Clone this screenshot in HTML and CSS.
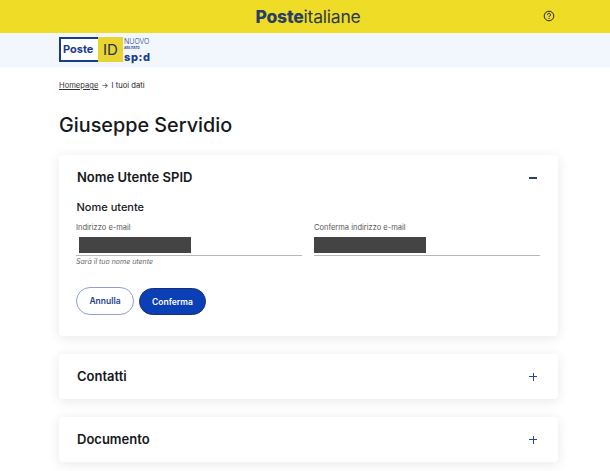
FILE: index.html
```html
<!DOCTYPE html>
<html lang="it">
  <head>
    <meta charset="UTF-8" />
    <meta name="viewport" content="width=device-width, initial-scale=1.0" />
    <title>I tuoi dati</title>
    <link rel="stylesheet" href="styles.css">
  </head>

  <body>
    <header class="topbar">
      <div class="brand"><strong>Poste</strong>italiane</div>
      <svg class="help" width="12" height="12" viewBox="0 0 12 12" fill="none" stroke="#222">
        <circle cx="6" cy="6" r="4.8" />
        <path d="M4.5 4.8a1.5 1.5 0 1 1 2.3 1.2c-.5.3-.8.6-.8 1.1" />
        <path d="M6 8v1" />
      </svg>
    </header>

    <div class="subbar">
      <div class="logo">
        <div class="logo-poste">Poste</div>
        <div class="logo-id">ID</div>
        <div class="logo-spid">
          <span class="nuovo">NUOVO</span>
          <span class="abilitato">ABILITATO</span>
          <span class="spid">sp:d</span>
        </div>
      </div>
    </div>

    <main class="container">
      <nav class="crumbs">
        <a href="#">Homepage</a>
        <span class="arrow">→</span>
        <span>I tuoi dati</span>
      </nav>

      <h1>Giuseppe Servidio</h1>

      <section class="card card-open">
        <div class="card-head">
          <h2>Nome Utente SPID</h2>
          <span class="toggle minus"></span>
        </div>
        <h3>Nome utente</h3>
        <div class="fields">
          <div class="field">
            <label>Indirizzo e-mail</label>
            <div class="input"><span class="redacted"></span></div>
            <p class="hint">Sarà il tuo nome utente</p>
          </div>
          <div class="field field-second">
            <label>Conferma indirizzo e-mail</label>
            <div class="input"><span class="redacted"></span></div>
          </div>
        </div>
        <div class="actions">
          <button class="btn btn-outline">Annulla</button>
          <button class="btn btn-primary">Conferma</button>
        </div>
      </section>

      <section class="card">
        <div class="card-head">
          <h2>Contatti</h2>
          <span class="toggle plus"></span>
        </div>
      </section>

      <section class="card">
        <div class="card-head">
          <h2>Documento</h2>
          <span class="toggle plus"></span>
        </div>
      </section>
    </main>
  </body>
</html>
```

FILE: styles.css
```css
* {
  box-sizing: border-box;
}

html,
body {
  height: 471px;
  overflow: hidden;
}

body {
  margin: 0;
  font-family: Inter, "Liberation Sans", sans-serif;
  color: #15181c;
  background: #fff;
}

.topbar {
  height: 33px;
  background: #efdc27;
  display: flex;
  justify-content: center;
  align-items: center;
  position: relative;
}

.brand {
  font-size: 17.5px;
  letter-spacing: -0.2px;
  color: #2e3a44;
  margin-left: 6px;
}

.brand strong {
  font-weight: 800;
  color: #2a3f62;
}

.help {
  position: absolute;
  left: 543px;
  top: 10px;
}

.subbar {
  height: 34px;
  background: #f2f7fd;
  padding: 4px 0 0 59px;
}

.logo {
  display: flex;
  height: 25px;
}

.logo-poste {
  width: 39px;
  background: #fff;
  border: 2px solid #1a3a8c;
  border-right: 0;
  color: #1a3a8c;
  font-size: 11px;
  font-weight: 700;
  line-height: 21px;
  padding-left: 2px;
}

.logo-id {
  width: 25px;
  background: #e9d52f;
  color: #1f3050;
  font-size: 15px;
  line-height: 25px;
  text-align: center;
}

.logo-spid {
  display: flex;
  flex-direction: column;
  padding-left: 1px;
  color: #1a3a8c;
}

.nuovo {
  font-size: 7px;
  font-weight: 300;
  line-height: 8.6px;
  margin-top: 1.4px;
}

.abilitato {
  font-size: 3px;
  font-weight: 700;
  line-height: 3.8px;
}

.spid {
  font-size: 11px;
  font-weight: 800;
  line-height: 13.4px;
  letter-spacing: 0.6px;
}

.container {
  width: 499px;
  margin-left: 59px;
}

.crumbs {
  display: flex;
  gap: 3px;
  font-size: 7.6px;
  line-height: 10px;
  padding-top: 14px;
  color: #222;
}

.crumbs a {
  color: #333;
  text-decoration: underline;
}

h1 {
  margin: 22px 0 18px;
  font-size: 19.8px;
  line-height: 24px;
  font-weight: 500;
}

.card {
  background: #fff;
  border-radius: 4px;
  box-shadow: 0 2px 12px rgba(40, 50, 80, 0.11);
  padding: 0 17px;
  height: 45px;
  margin-bottom: 18px;
}

.card-open {
  height: 181px;
}

.card-head {
  display: flex;
  justify-content: space-between;
  align-items: center;
  height: 45px;
  padding: 0 0 1px 1px;
}

h2 {
  margin: 0;
  font-size: 13px;
  font-weight: 600;
}

.toggle {
  width: 8px;
  height: 8px;
  margin: 2px 4px 0 0;
  position: relative;
}

.toggle::before,
.plus::after {
  content: "";
  position: absolute;
  background: #2b4a86;
}

.toggle::before {
  left: 0;
  right: 0;
  top: 3px;
  height: 1px;
}

.minus::before {
  height: 2px;
  background: #2d3f66;
}

.plus::after {
  top: 0;
  bottom: 0;
  left: 3.5px;
  width: 1px;
}

h3 {
  margin: 0 0 9px;
  padding-left: 0.5px;
  font-size: 11px;
  line-height: 14px;
  font-weight: 500;
}

.fields {
  display: flex;
  gap: 12px;
}

.field {
  width: 226px;
}

.field label {
  display: block;
  font-size: 7.5px;
  line-height: 10px;
  color: #555;
}

.input {
  height: 19px;
  margin-top: 4px;
  border-bottom: 1px solid #b4b8be;
  padding: 0 0 0 3px;
}

.field-second .input {
  padding-left: 0;
}

.redacted {
  display: block;
  width: 112px;
  height: 16px;
  background: #444;
}

.hint {
  margin: 2px 0 0;
  font-size: 7px;
  line-height: 8px;
  font-style: italic;
  color: #666;
}

.actions {
  display: flex;
  gap: 5px;
  margin-top: 21px;
  align-items: flex-start;
}

.btn {
  height: 28px;
  border-radius: 14px;
  font-family: inherit;
  font-size: 8.5px;
  font-weight: 600;
}

.btn-outline {
  width: 58px;
  background: #fff;
  border: 1px solid #8e9fd0;
  color: #1f3f8f;
}

.btn-primary {
  width: 67px;
  height: 27px;
  margin-top: 1px;
  background: #0a3fb5;
  border: 1px solid #1a2f70;
  color: #fff;
}
```
